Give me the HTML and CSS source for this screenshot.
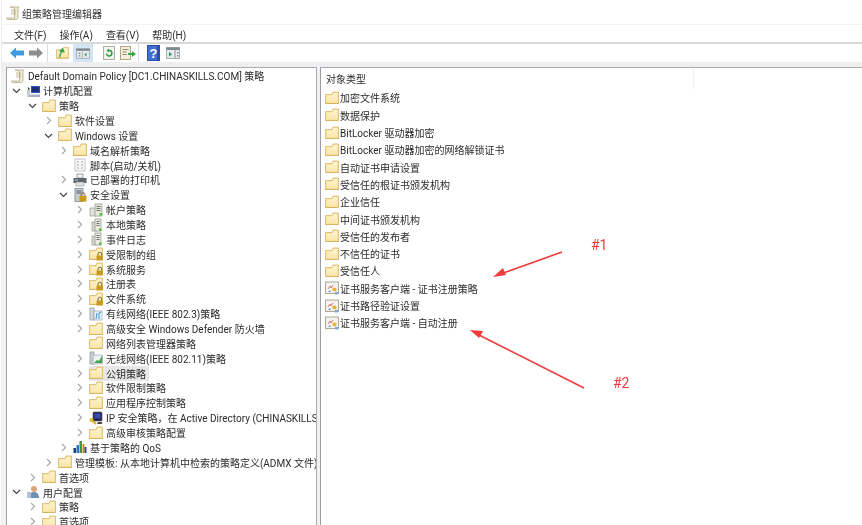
FILE: index.html
```html
<!DOCTYPE html>
<html lang="zh-CN">
<head>
<meta charset="utf-8">
<title>组策略管理编辑器</title>
<link rel="stylesheet" href="styles.css">
</head>
<body>
<svg class="sprite" aria-hidden="true">
  <defs>
    <linearGradient id="fg" x1="0" y1="0" x2="0" y2="1"><stop offset="0" stop-color="#fdf4d2"/><stop offset="1" stop-color="#f9e6a8"/></linearGradient>
    <symbol id="i-folder" viewBox="0 0 14 14"><path d="M.5 3.500H7L8 1h5.500v11.500H.5z" fill="#f4dd97" stroke="#dfc37c"/><path d="M1.500 4.500H7.500L8.700 2h3.800v9.500h-11z" fill="url(#fg)"/><path d="M.5 12.500h13" stroke="#d6b365"/></symbol>
    <symbol id="i-lockfolder" viewBox="0 0 14 14"><use href="#i-folder"/><rect x="7.500" y="8.500" width="6.500" height="5" fill="#c89a1d"/><path d="M9 8.500V7a1.800 1.800 0 0 1 3.600 0v1.500" fill="none" stroke="#7b6a3a"/></symbol>
    <symbol id="i-policy" viewBox="0 0 14 14"><path d="M4 1h9c-1 1-1 2-1 3v7c0 1.500-1 2.500-2 2.500H2c-1 0-1.500-.7-1.500-1.500h8V3C8.500 2 6 1 4 1z" fill="#f1ead2" stroke="#b4ab8c" stroke-width=".8"/><path d="M5 4h5M5 6h5M5 8h5" stroke="#b5a987" stroke-width=".8"/></symbol>
    <symbol id="i-computer" viewBox="0 0 14 14"><rect x="1" y="6" width="3" height="7" fill="#c9c9d2"/><rect x="5" y="2" width="9" height="7" fill="#2a5bb0"/><rect x="6" y="3" width="7" height="5" fill="#1d2f78"/><path d="M4 10.500h10v2.500H3z" fill="#a6aec4"/><path d="M2 3l2 2-2 1z" fill="#333"/></symbol>
    <symbol id="i-user" viewBox="0 0 14 14"><circle cx="8" cy="4" r="3" fill="#d9a67a"/><path d="M3 13c0-4 2-6 5-6s5 2 5 6z" fill="#6f8fb4"/><rect x="1" y="7" width="4" height="6" fill="#b9c2cc"/></symbol>
    <symbol id="i-script" viewBox="0 0 14 14"><rect x="2" y="1" width="10" height="12" fill="#f7f7f7" stroke="#c4c4c4"/><path d="M4 4h2M8 4h2M4 7h2M8 7h2M4 10h2M8 10h2" stroke="#a8a8a8"/></symbol>
    <symbol id="i-printer" viewBox="0 0 14 14"><rect x="4" y="1" width="6" height="4" fill="#f2f2f2" stroke="#8f8f8f" stroke-width=".8"/><rect x=".5" y="5" width="13" height="5" fill="#5f6468"/><rect x="3" y="9" width="8" height="4" fill="#dfe3e6" stroke="#8f8f8f" stroke-width=".6"/><path d="M2 7h3" stroke="#b8d2e8"/></symbol>
    <symbol id="i-secure" viewBox="0 0 14 14"><rect x="2" y="0.500" width="8" height="13" fill="#c7ccd2" stroke="#7d8690" stroke-width=".8"/><path d="M3.500 3h5M3.500 5h5" stroke="#4f5a66"/><rect x="6.500" y="8" width="7" height="5.500" fill="#c99c18"/><path d="M8 8V6.800a2 2 0 0 1 4 0V8" fill="none" stroke="#7b6a3a"/></symbol>
    <symbol id="i-account" viewBox="0 0 14 14"><rect x="1" y="5" width="6" height="8" fill="#dfe0d8" stroke="#9a9c90" stroke-width=".7"/><rect x="6" y="1" width="7" height="12" fill="#e8e8de" stroke="#8d9088" stroke-width=".7"/><path d="M7.500 3.500h4M7.500 5.500h4M7.500 7.500h4" stroke="#6e7570"/><rect x="10.500" y="10" width="2.500" height="2.500" fill="#54c23c"/></symbol>
    <symbol id="i-local" viewBox="0 0 14 14"><rect x="3" y="4" width="5" height="9" fill="#d8d8cc" stroke="#9a9c90" stroke-width=".7"/><rect x="6" y="1" width="6" height="12" fill="#eaeae0" stroke="#8d9088" stroke-width=".7"/><path d="M7.500 3.500h3M7.500 5.500h3M7.500 7.500h3" stroke="#6e7570"/><rect x="10" y="10.500" width="2.500" height="2.500" fill="#54c23c"/></symbol>
    <symbol id="i-wired" viewBox="0 0 14 14"><rect x="1" y="1" width="4" height="12" fill="#d4d8da" stroke="#8f969a" stroke-width=".7"/><rect x="5" y="4" width="8" height="9" fill="#eef2f4" stroke="#9aa4aa" stroke-width=".7"/><path d="M7 12l1-6M10 12V6l2-1" stroke="#2c8fc9" fill="none"/></symbol>
    <symbol id="i-wireless" viewBox="0 0 14 14"><rect x="1" y="1" width="4" height="12" fill="#c9ced0" stroke="#8f969a" stroke-width=".7"/><rect x="4" y="4" width="9.500" height="9" fill="#eef2ee" stroke="#9aa4aa" stroke-width=".7"/><path d="M5 12l3-3 2 1 3-5v7z" fill="#3fa34d"/></symbol>
    <symbol id="i-ipsec" viewBox="0 0 14 14"><rect x="4" y="1" width="9" height="9" rx="1" fill="#20204e" stroke="#5b5b6d" stroke-width=".7"/><rect x="5.500" y="2.500" width="6" height="5" fill="#3a4bb0"/><path d="M1 8l6 5" stroke="#d8b11e" stroke-width="2.200"/><circle cx="2.500" cy="9" r="2" fill="#e2bd2a"/><path d="M9 11h4v2H8z" fill="#4a4a4a"/></symbol>
    <symbol id="i-qos" viewBox="0 0 14 14"><rect x="0.500" y="8" width="2.500" height="5" fill="#1f3f78"/><rect x="3.500" y="5" width="2.500" height="8" fill="#2b74c4"/><rect x="6.500" y="1" width="2.500" height="12" fill="#3d9b3e"/><rect x="9.500" y="4" width="2" height="9" fill="#e37f22"/><rect x="11.500" y="7" width="2" height="6" fill="#264f96"/></symbol>
    <symbol id="i-cert" viewBox="0 0 14 14"><rect x=".5" y="1" width="13" height="11.500" fill="#f3f3f3" stroke="#b0a88e"/><path d="M3 8l2-3 1 2 2-3" fill="none" stroke="#d86a5e" stroke-width=".9"/><circle cx="9.500" cy="8.500" r="2.100" fill="#eab22c"/><path d="M3 11l2-2 1 2z" fill="#6f9ad8"/><path d="M10 11h3v2.500h-3z" fill="#7ea6e0"/></symbol>
    <symbol id="i-back" viewBox="0 0 14 12"><path d="M0 6l6-5.500V3.500h8v5H6v3z"/></symbol>
    <symbol id="i-chev-r" viewBox="0 0 9 9"><path d="M3 1l3.500 3.500L3 8" fill="none" stroke="#a6a6a6" stroke-width="1.100"/></symbol>
    <symbol id="i-chev-d" viewBox="0 0 9 9"><path d="M1 3l3.500 3.500L8 3" fill="none" stroke="#404040" stroke-width="1.100"/></symbol>
  </defs>
</svg>

<div class="app">
  <header class="title-bar"><svg class="ico"><use href="#i-policy"/></svg><span>组策略管理编辑器</span></header>
  <nav class="menu-bar"><span>文件(F)</span><span>操作(A)</span><span>查看(V)</span><span>帮助(H)</span></nav>
  <div class="tool-bar">
    <svg class="tb tb-back"><use href="#i-back"/></svg>
    <svg class="tb tb-fwd"><use href="#i-back"/></svg>
    <i class="sep sep-a"></i>
    <svg class="tb tb-up" viewBox="0 0 14 14"><use href="#i-folder"/><path d="M4 12c0-4 1-6 3-7M4 5l3-3 2 4z" fill="#36a24a" stroke="#36a24a"/></svg>
    <span class="tb-active"><svg class="tb-pane" viewBox="0 0 16 12"><rect x=".5" y=".5" width="15" height="11" fill="#e7ebec" stroke="#a4acb0"/><rect x=".5" y=".5" width="15" height="2.500" fill="#7d8a90"/><rect x="7" y="4" width="1" height="7" fill="#a4acb0"/><path d="M3 5h2v1.500H3zM3 8h2v1.500H3z" fill="#7d8a90"/><path d="M12 5l-2.500 2.200L12 9.500z" fill="#23945a"/></svg></span>
    <svg class="tb tb-refresh" viewBox="0 0 14 14"><rect x="1.500" y=".5" width="11" height="13" fill="#f5f5f0" stroke="#aeaea4"/><path d="M4.500 7.500a2.700 2.700 0 1 0 2.500-3" fill="none" stroke="#2f9a46" stroke-width="1.500"/><path d="M7 2.500v4l-2.500-2z" fill="#2f9a46"/></svg>
    <svg class="tb tb-export" viewBox="0 0 16 14"><rect x=".5" y=".5" width="10" height="13" fill="#f3efdc" stroke="#b0a884"/><path d="M2.500 3.500h6M2.500 6h4M2.500 8.500h4" stroke="#8f8a70"/><path d="M8 7h4V5l4 3-4 3V9H8z" fill="#3aa63f"/></svg>
    <i class="sep sep-b"></i>
    <svg class="tb tb-help" viewBox="0 0 13 16"><rect width="13" height="16" fill="#2c4fa8"/><rect x="1" y="1" width="9" height="14" fill="#3f6fd0"/><text class="help-q" x="6.500" y="12.500" text-anchor="middle">?</text></svg>
    <svg class="tb tb-view" viewBox="0 0 14 12"><rect x=".5" y=".5" width="13" height="11" fill="#e7ebec" stroke="#a4acb0"/><rect x=".5" y=".5" width="13" height="2.500" fill="#7d8a90"/><rect x="8.500" y="3" width="1" height="8" fill="#8a969c"/><path d="M3 5l3 2.200L3 9.500z" fill="#23945a"/><path d="M11 5h1.500v1.500H11zM11 8h1.500v1.500H11z" fill="#7d8a90"/></svg>
  </div>
  <div class="band"></div>

  <main class="panes">
    <section class="tree">
      <div class="row l0"><span class="item"><svg class="ico"><use href="#i-policy"/></svg><span class="lbl">Default Domain Policy [DC1.CHINASKILLS.COM] 策略</span></span></div>
      <div class="row l1"><svg class="chev"><use href="#i-chev-d"/></svg><span class="item"><svg class="ico"><use href="#i-computer"/></svg><span class="lbl">计算机配置</span></span></div>
      <div class="row l2"><svg class="chev"><use href="#i-chev-d"/></svg><span class="item"><svg class="ico"><use href="#i-folder"/></svg><span class="lbl">策略</span></span></div>
      <div class="row l3"><svg class="chev"><use href="#i-chev-r"/></svg><span class="item"><svg class="ico"><use href="#i-folder"/></svg><span class="lbl">软件设置</span></span></div>
      <div class="row l3"><svg class="chev"><use href="#i-chev-d"/></svg><span class="item"><svg class="ico"><use href="#i-folder"/></svg><span class="lbl">Windows 设置</span></span></div>
      <div class="row l4"><svg class="chev"><use href="#i-chev-r"/></svg><span class="item"><svg class="ico"><use href="#i-folder"/></svg><span class="lbl">域名解析策略</span></span></div>
      <div class="row l4"><span class="chev"></span><span class="item"><svg class="ico"><use href="#i-script"/></svg><span class="lbl">脚本(启动/关机)</span></span></div>
      <div class="row l4"><svg class="chev"><use href="#i-chev-r"/></svg><span class="item"><svg class="ico"><use href="#i-printer"/></svg><span class="lbl">已部署的打印机</span></span></div>
      <div class="row l4"><svg class="chev"><use href="#i-chev-d"/></svg><span class="item"><svg class="ico"><use href="#i-secure"/></svg><span class="lbl">安全设置</span></span></div>
      <div class="row l5"><svg class="chev"><use href="#i-chev-r"/></svg><span class="item"><svg class="ico"><use href="#i-account"/></svg><span class="lbl">帐户策略</span></span></div>
      <div class="row l5"><svg class="chev"><use href="#i-chev-r"/></svg><span class="item"><svg class="ico"><use href="#i-local"/></svg><span class="lbl">本地策略</span></span></div>
      <div class="row l5"><svg class="chev"><use href="#i-chev-r"/></svg><span class="item"><svg class="ico"><use href="#i-local"/></svg><span class="lbl">事件日志</span></span></div>
      <div class="row l5"><svg class="chev"><use href="#i-chev-r"/></svg><span class="item"><svg class="ico"><use href="#i-lockfolder"/></svg><span class="lbl">受限制的组</span></span></div>
      <div class="row l5"><svg class="chev"><use href="#i-chev-r"/></svg><span class="item"><svg class="ico"><use href="#i-lockfolder"/></svg><span class="lbl">系统服务</span></span></div>
      <div class="row l5"><svg class="chev"><use href="#i-chev-r"/></svg><span class="item"><svg class="ico"><use href="#i-lockfolder"/></svg><span class="lbl">注册表</span></span></div>
      <div class="row l5"><svg class="chev"><use href="#i-chev-r"/></svg><span class="item"><svg class="ico"><use href="#i-lockfolder"/></svg><span class="lbl">文件系统</span></span></div>
      <div class="row l5"><svg class="chev"><use href="#i-chev-r"/></svg><span class="item"><svg class="ico"><use href="#i-wired"/></svg><span class="lbl">有线网络(IEEE 802.3)策略</span></span></div>
      <div class="row l5"><svg class="chev"><use href="#i-chev-r"/></svg><span class="item"><svg class="ico"><use href="#i-folder"/></svg><span class="lbl">高级安全 Windows Defender 防火墙</span></span></div>
      <div class="row l5"><span class="chev"></span><span class="item"><svg class="ico"><use href="#i-folder"/></svg><span class="lbl">网络列表管理器策略</span></span></div>
      <div class="row l5"><svg class="chev"><use href="#i-chev-r"/></svg><span class="item"><svg class="ico"><use href="#i-wireless"/></svg><span class="lbl">无线网络(IEEE 802.11)策略</span></span></div>
      <div class="row l5 selected"><svg class="chev"><use href="#i-chev-r"/></svg><span class="item"><svg class="ico"><use href="#i-folder"/></svg><span class="lbl">公钥策略</span></span></div>
      <div class="row l5"><svg class="chev"><use href="#i-chev-r"/></svg><span class="item"><svg class="ico"><use href="#i-folder"/></svg><span class="lbl">软件限制策略</span></span></div>
      <div class="row l5"><svg class="chev"><use href="#i-chev-r"/></svg><span class="item"><svg class="ico"><use href="#i-folder"/></svg><span class="lbl">应用程序控制策略</span></span></div>
      <div class="row l5"><svg class="chev"><use href="#i-chev-r"/></svg><span class="item"><svg class="ico"><use href="#i-ipsec"/></svg><span class="lbl">IP 安全策略，在 Active Directory (CHINASKILLS.COM)</span></span></div>
      <div class="row l5"><svg class="chev"><use href="#i-chev-r"/></svg><span class="item"><svg class="ico"><use href="#i-folder"/></svg><span class="lbl">高级审核策略配置</span></span></div>
      <div class="row l4"><svg class="chev"><use href="#i-chev-r"/></svg><span class="item"><svg class="ico"><use href="#i-qos"/></svg><span class="lbl">基于策略的 QoS</span></span></div>
      <div class="row l3"><svg class="chev"><use href="#i-chev-r"/></svg><span class="item"><svg class="ico"><use href="#i-folder"/></svg><span class="lbl">管理模板: 从本地计算机中检索的策略定义(ADMX 文件)</span></span></div>
      <div class="row l2"><svg class="chev"><use href="#i-chev-r"/></svg><span class="item"><svg class="ico"><use href="#i-folder"/></svg><span class="lbl">首选项</span></span></div>
      <div class="row l1"><svg class="chev"><use href="#i-chev-d"/></svg><span class="item"><svg class="ico"><use href="#i-user"/></svg><span class="lbl">用户配置</span></span></div>
      <div class="row l2"><svg class="chev"><use href="#i-chev-r"/></svg><span class="item"><svg class="ico"><use href="#i-folder"/></svg><span class="lbl">策略</span></span></div>
      <div class="row l2"><svg class="chev"><use href="#i-chev-r"/></svg><span class="item"><svg class="ico"><use href="#i-folder"/></svg><span class="lbl">首选项</span></span></div>
    </section>

    <section class="list">
      <div class="list-head"><span class="col-name">对象类型</span></div>
      <div class="entry"><svg class="ico"><use href="#i-folder"/></svg><span>加密文件系统</span></div>
      <div class="entry"><svg class="ico"><use href="#i-folder"/></svg><span>数据保护</span></div>
      <div class="entry"><svg class="ico"><use href="#i-folder"/></svg><span>BitLocker 驱动器加密</span></div>
      <div class="entry"><svg class="ico"><use href="#i-folder"/></svg><span>BitLocker 驱动器加密的网络解锁证书</span></div>
      <div class="entry"><svg class="ico"><use href="#i-folder"/></svg><span>自动证书申请设置</span></div>
      <div class="entry"><svg class="ico"><use href="#i-folder"/></svg><span>受信任的根证书颁发机构</span></div>
      <div class="entry"><svg class="ico"><use href="#i-folder"/></svg><span>企业信任</span></div>
      <div class="entry"><svg class="ico"><use href="#i-folder"/></svg><span>中间证书颁发机构</span></div>
      <div class="entry"><svg class="ico"><use href="#i-folder"/></svg><span>受信任的发布者</span></div>
      <div class="entry"><svg class="ico"><use href="#i-folder"/></svg><span>不信任的证书</span></div>
      <div class="entry"><svg class="ico"><use href="#i-folder"/></svg><span>受信任人</span></div>
      <div class="entry"><svg class="ico"><use href="#i-cert"/></svg><span>证书服务客户端 - 证书注册策略</span></div>
      <div class="entry"><svg class="ico"><use href="#i-cert"/></svg><span>证书路径验证设置</span></div>
      <div class="entry"><svg class="ico"><use href="#i-cert"/></svg><span>证书服务客户端 - 自动注册</span></div>
    </section>
  </main>

  <svg class="arrows" viewBox="0 0 862 525" aria-hidden="true">
    <path d="M562 252L498 275M584 388L475 333" stroke="#ef3b3b" stroke-width="1.600" fill="none"/>
    <path d="M493 277l10-9 3 7zM470 330l13 1-4 7z" fill="#ef3b3b"/>
  </svg>
  <span class="note note-1">#1</span>
  <span class="note note-2">#2</span>
</div>
</body>
</html>
```

FILE: styles.css
```css
* { box-sizing: border-box; }
html, body { margin: 0; padding: 0; background: #fff; }
body {
  width: 862px;
  height: 525px;
  overflow: hidden;
  font-family: Roboto, "Noto Sans CJK SC", sans-serif;
  font-size: 10px;
  color: #2b2b2b;
}
.sprite { position: absolute; width: 0; height: 0; }
.app {
  position: relative;
  display: flex;
  flex-direction: column;
  width: 862px;
  height: 525px;
  overflow: hidden;
  border-left: 1px solid #ececec;
  margin-left: 1px;
  filter: blur(0.45px);
}
.ico { width: 14px; height: 14px; flex: none; }

.title-bar {
  display: flex;
  align-items: center;
  gap: 2px;
  height: 25px;
  padding: 2px 0 0 4px;
  border-bottom: 1px solid #f3f3f3;
  color: #333;
}
.menu-bar {
  display: flex;
  align-items: center;
  gap: 13px;
  height: 19px;
  padding-left: 12px;
  border-bottom: 2px solid #d9d9d9;
  padding-top: 1px;
}
.tool-bar {
  position: relative;
  display: flex;
  align-items: center;
  height: 18px;
  padding-left: 8px;
}
.tb { flex: none; display: block; }
.tb-back { width: 14px; height: 12px; fill: #3f9be0; }
.tb-fwd { width: 14px; height: 12px; fill: #8d8d8d; transform: scaleX(-1); margin-left: 5px; }
.sep { flex: none; display: block; width: 1px; height: 18px; background: #dcdcdc; }
.sep-a { margin: 0 8px 0 4px; }
.tb-up { width: 13px; height: 14px; }
.tb-active {
  display: flex;
  align-items: center;
  justify-content: center;
  width: 20px;
  height: 18px;
  margin-left: 4px;
  background: #d3e5f4;
}
.tb-pane { width: 14px; height: 11px; display: block; }
.tb-refresh { width: 14px; height: 14px; margin-left: 9px; }
.tb-export { width: 16px; height: 14px; margin-left: 4px; }
.sep-b { margin: 0 8px 0 2px; }
.tb-help { width: 13px; height: 16px; }
.help-q { font-family: "Liberation Sans", sans-serif; font-size: 13px; font-weight: 700; fill: #fff; }
.tb-view { width: 14px; height: 12px; margin-left: 6px; }
.band { height: 5px; background: #efefef; flex: none; }

.panes {
  flex: 1;
  display: flex;
  min-height: 0;
  background: #f2f2f2;
  padding-left: 4px;
}
.tree {
  width: 311px;
  flex: none;
  padding-top: 0.5px;
  border-top: 1px solid #a9a9b6;
  border-left: 1px solid #9d9da8;
  border-right: 1px solid #a9a9b6;
  background: #fff;
  overflow: hidden;
}
.row {
  display: flex;
  align-items: center;
  height: 14.87px;
  white-space: nowrap;
}
.chev { width: 9px; height: 9px; flex: none; display: block; margin-right: 5px; }
.item { display: inline-flex; align-items: center; gap: 3px; height: 15px; flex: none; }
.selected .item { background: #e6e6e6; padding-right: 3px; }
.lbl { display: block; }
.l0 { padding-left: 4px; }
.l1 { padding-left: 5px; }
.l2 { padding-left: 21px; }
.l3 { padding-left: 37px; }
.l4 { padding-left: 52px; }
.l5 { padding-left: 68px; }

.list {
  flex: 1;
  margin-left: 3px;
  border-top: 1px solid #a9a9b6;
  border-left: 1px solid #9d9da8;
  background: #fff;
  overflow: hidden;
}
.list-head {
  height: 21.3px;
  display: flex;
  align-items: center;
  padding-left: 5px;
}
.col-name {
  width: 368px;
  height: 100%;
  display: flex;
  align-items: center;
  border-right: 1px solid #f1f1f1;
  flex: none;
}
.entry {
  display: flex;
  align-items: center;
  gap: 1px;
  height: 17.3px;
  padding-left: 4px;
  white-space: nowrap;
}

.arrows {
  position: absolute;
  left: -2px;
  top: 0;
  width: 862px;
  height: 525px;
  pointer-events: none;
}
.note {
  position: absolute;
  color: #ef3b3b;
  font-size: 14px;
  line-height: 16px;
}
.note-1 { left: 589px; top: 237px; }
.note-2 { left: 611px; top: 375px; }
```
